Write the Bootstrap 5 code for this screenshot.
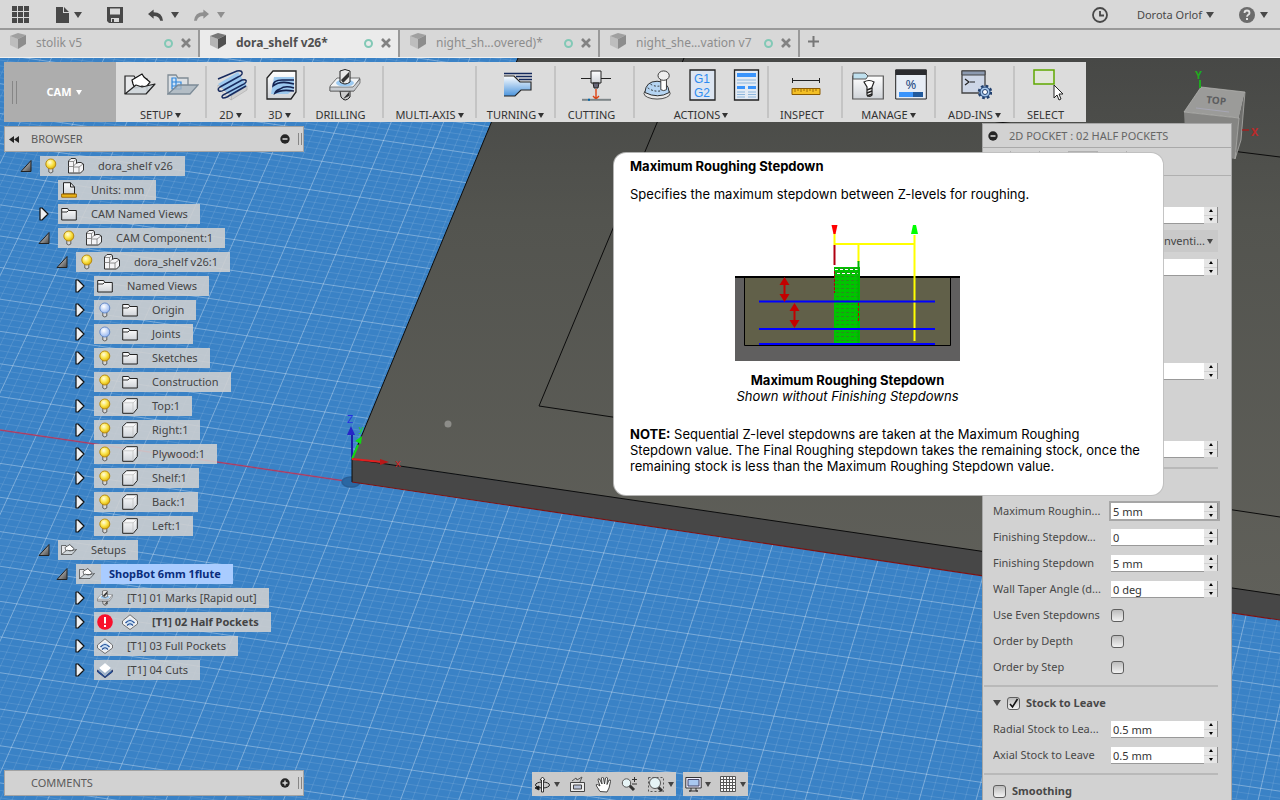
<!DOCTYPE html>
<html lang="en">
<head>
<meta charset="utf-8">
<meta name="viewport" content="width=device-width, initial-scale=1">
<title>dora_shelf v26</title>
<link rel="stylesheet" href="https://cdn.jsdelivr.net/npm/bootstrap@5.3.0/dist/css/bootstrap.min.css">
<style>
  body { font-family: "Noto Sans", "Open Sans", sans-serif; font-size: 11px; line-height: 16px; color: #444; }
  button { color: inherit; line-height: inherit; }
  .plain { background: none; border: 0; padding: 0; display: inline-flex; align-items: center; }
  svg { display: block; flex: none; }
  .tri { width: 0; height: 0; border: 4px solid transparent; border-top: 6px solid currentColor; border-bottom: 0; flex: none; }
  .tri-sm { border-width: 5px 3px 0; }

  .app-bar { height: 30px; background: #d8d8d8; border-bottom: 2px solid #999; padding: 1px 12px 0; color: #484848; }
  .gap-wide { gap: 25px; }
  .gap-mid { gap: 15px; }
  .doc-tabs { height: 28px; background: #d8d8d8; border-bottom: 1px solid #f0f0f0; }
  .doc-tab { width: 200px; border-right: 2px solid #999; padding: 0 7px 1px 10px; font-size: 12px; color: #8d8d8d; }
  .doc-tab > svg { margin: 0 10px 4px 0; }
  .doc-tab.active { background: #ebebeb; color: #505050; font-weight: 700; }
  .doc-tab .sync { width: 9px; height: 9px; border: 2px solid #82c9b6; border-radius: 50%; }

  .stage { background: #3a82c6; }
  .scene { position: absolute; inset: 0; width: 100%; height: 100%; }

  .tools { margin: 4px 0 0 4px; background: #dcdcdc; width: max-content; height: 60px; color: #333; }
  .workspace { width: 112px; background: #adadad; color: #fff; font-weight: 700; position: relative; }
  .grip { width: 5px; height: 23px; border: 1px solid #868686; border-width: 0 1px; }
  .tool-group { padding: 7px 0 0; position: relative; }
  .tool-group .plain { gap: 2px; padding-right: 2px; }
  .tool-group:not(:last-child)::after { content: ""; position: absolute; right: 0; top: 4px; bottom: 4px; width: 2px; background: #c4c4c4; }
  .tool-icons { height: 38px; gap: 11px; }
  .w-sm-group { width: 49px; } .w-md-group { width: 79px; } .w-in { width: 74px; } .w-lg-group { width: 93px; } .w-xl-group { width: 134px; } .w-sel { width: 71px; } .w-set { width: 91px; }
  .w-sel { padding-right: 8px; }

  .dock { width: 300px; margin: 4px 0 4px 4px; }
  .dock-bar { height: 26px; background: #d2d2d2; border: 1px solid #a3a3a3; padding: 0 1px 0 4px; color: #5a5a5a; }
  .dock-bar .grip { height: 12px; width: 4px; }
  .dock-title { margin-left: 12px; }
  .dock-title.solo { margin-left: 22px; }

  .tree, .tree ul { list-style: none; margin: 0; padding: 0; }
  .tree { padding: 2px 0 0 12px; color: #444; }
  .tree ul { padding-left: 18px; }
  .node { height: 24px; }
  .node > .plain, .node > .no-toggle { width: 24px; height: 20px; }
  .chip { height: 20px; background: rgba(208, 208, 208, .88); padding-right: 12px; }
  .chip .slot { width: 25px; display: flex; justify-content: center; padding-right: 3px; }
  .chip .node-text { padding-left: 8px; white-space: nowrap; }
  .chip.picked { padding-right: 0; }
  .chip.picked .node-text { background: #a9ccff; color: #0a2d7c; height: 20px; line-height: 20px; padding-right: 12px; }

  .nav-dock { padding: 0 6px 4px 0; gap: 7px; }
  .nav-set { height: 24px; background: #cacaca; padding: 0 2px; gap: 9px; }
  .nav-set .plain { gap: 3px; }

  .command { width: 250px; margin: 1px 48px 0 0; background: #d2d2d2; border: solid #a6a6a6; border-width: 1px 1px 0; color: #484848; }
  .command-head { height: 24px; border-bottom: 1px solid #a9a9a9; padding-left: 5px; gap: 11px; color: #666; }
  .command-tabs { height: 28px; border-bottom: 1px solid #b0b0b0; padding: 3px 0 0 27px; }
  .command-tabs button { width: 29px; height: 24px; border-left: 1px solid #b0b0b0; }
  .command-tabs .on { border: 1px solid #b0b0b0; }
  .field { height: 26px; padding: 0 13px 0 10px; display: flex; align-items: center; }
  .field > label:first-child { width: 110px; margin-right: 8px; overflow: hidden; text-overflow: ellipsis; white-space: nowrap; }
  .spin-box { display: flex; height: 16px; width: 107px; margin-left: auto; border-right: 1px solid #8d8d8d; }
  .spin-box input { flex: 1; min-width: 0; border: 0; border-bottom: 1px solid #999; background: #fff; padding: 0 2px; color: #333; outline: 0; height: 17px; line-height: 15px; }
  .spin-box.focused { outline: 2px solid #a6a6a6; }
  .spin-btns { width: 13px; display: flex; flex-direction: column; gap: 1px; }
  .spin-btns button { background: #e6e6e6; border: 0; padding: 0; height: 8px; display: flex; align-items: center; justify-content: center; }
  .spin-btns i { border: 2px solid transparent; width: 0; height: 0; }
  .spin-btns .up { border-bottom: 3px solid #000; border-top: 0; } .spin-btns .down { border-top: 3px solid #000; border-bottom: 0; }
  .pick { width: 107px; margin-left: auto; background: #c9c9c9; height: 22px; padding-right: 5px; display: flex; align-items: center; justify-content: flex-end; }
  .pick select { appearance: none; border: 0; background: none; padding: 0 2px 0 0; color: #444; text-align: right; width: 75px; text-overflow: ellipsis; }
  .tick { appearance: none; width: 13px; height: 13px; border: 1px solid #5e5e5e; border-radius: 3px; background: linear-gradient(#bcbcbc, #f2f2f2); margin: 0; flex: none; }
  .tick:checked { background: url("data:image/svg+xml,%3Csvg xmlns='http://www.w3.org/2000/svg' viewBox='0 0 11 11'%3E%3Cpath d='M2 6l2.500 3L9.500 1' fill='none' stroke='%23111' stroke-width='1.600'/%3E%3C/svg%3E"), linear-gradient(#bcbcbc, #f2f2f2); }
  .gap-tick { gap: 6px; }
  .rule { height: 10px; margin: 0 13px 0 1px; padding-top: 5px; }
  .rule::before { content: ""; display: block; height: 2px; background: #b9b9b9; }

  .help-tip { position: absolute; left: 614px; top: 95px; width: 549px; height: 342px; background: #fff; border-radius: 12px; box-shadow: 0 0 0 1px rgba(190,190,190,.9); color: #000; padding: 5px 16px; font-family: Inter, sans-serif; font-size: 13px; }
  .help-tip p { margin: 0 0 12px; white-space: nowrap; }
  .help-tip .figure-box { width: 435px; padding-top: 11px; text-align: center; }
  .help-tip .figure-box svg { margin: 0 auto 11px; }
  .help-tip .note-text { padding-top: 22px; }
</style>
</head>
<body class="vh-100 d-flex flex-column overflow-hidden">

<svg width="0" height="0" class="position-absolute" aria-hidden="true">
  <defs>
    <linearGradient id="gWhite" x1="0" y1="0" x2="0" y2="1"><stop offset="0" stop-color="#fff"/><stop offset="1" stop-color="#cfd3d8"/></linearGradient>
    <linearGradient id="gBlue" x1="0" y1="0" x2="0" y2="1"><stop offset="0" stop-color="#fff"/><stop offset="1" stop-color="#4a94dd"/></linearGradient>
    <radialGradient id="gYel" cx=".4" cy=".35" r=".7"><stop offset="0" stop-color="#fffbe0"/><stop offset=".5" stop-color="#fbe64e"/><stop offset="1" stop-color="#d9a800"/></radialGradient>
    <radialGradient id="gOff" cx=".4" cy=".35" r=".7"><stop offset="0" stop-color="#fff"/><stop offset="1" stop-color="#8fb2f2"/></radialGradient>
    <linearGradient id="gDark" x1="0" y1="0" x2="1" y2="1"><stop offset="0" stop-color="#eee"/><stop offset="1" stop-color="#444"/></linearGradient>
  </defs>
  <symbol id="cube" viewBox="0 0 16 16"><path d="M0 3L8 0l8 2-8 4z" fill="currentColor" opacity=".75"/><path d="M0 3l8 3v10l-8-4z" fill="currentColor" opacity=".35"/><path d="M8 6l8-4v9l-8 5z" fill="currentColor"/></symbol>
  <symbol id="open" viewBox="0 0 20 20"><path d="M15 4.500v11H5z" fill="url(#gDark)" stroke="#222" stroke-linejoin="round"/></symbol>
  <symbol id="shut" viewBox="0 0 20 20"><path d="M6 4h2l6 6-6 6H6z" fill="#eef0f2" stroke="#111" stroke-width="1.200" stroke-linejoin="round"/></symbol>
  <symbol id="bulb" viewBox="0 0 16 16"><path d="M5.800 9.500h4v4.500q-2 2-4 0z" fill="#d9d9d9" stroke="#555" stroke-width=".9"/><circle cx="7.800" cy="6" r="5" fill="url(#gYel)" stroke="#b38208" stroke-width=".9"/></symbol>
  <symbol id="bulbOff" viewBox="0 0 16 16"><path d="M5.800 9.500h4v4.500q-2 2-4 0z" fill="#d9d9d9" stroke="#555" stroke-width=".9"/><circle cx="7.800" cy="6" r="5" fill="url(#gOff)" stroke="#5e83c4" stroke-width=".9"/></symbol>
  <symbol id="comp" viewBox="0 0 16 16"><path d="M.5 3L3 .5h4.500l1 1V5.500l1.500-1h3l2.500 1.500v6l-3 3H.5z" fill="#f4f4f6" stroke="#333" stroke-linejoin="round"/><path d="M.5 8.500h5M5.500 15V4M1 3.500h5l2-2.500M5.500 9h5.500v6M11 9l4-3M5.500 8l3-3" fill="none" stroke="#777" stroke-width=".8"/></symbol>
  <symbol id="solid" viewBox="0 0 16 16"><path d="M.7 4.500L4.500.7h10.800v9.800l-4 4.800H.7z" fill="url(#gWhite)" stroke="#222" stroke-linejoin="round"/><path d="M11 5l3.500-3.500M2 4.800h9v9.500" fill="none" stroke="#bbb" stroke-width=".7"/></symbol>
  <symbol id="folder" viewBox="0 0 16 16"><path d="M.7 14V2.500h6l1 2h7.600V14z" fill="url(#gWhite)" stroke="#222"/><path d="M1 6h5l1.500-1.500" fill="none" stroke="#333"/></symbol>
  <symbol id="units" viewBox="0 0 16 16"><path d="M2.500 12V.7h7L13.500 5v7z" fill="url(#gWhite)" stroke="#222"/><path d="M9.500.7V5h4" fill="none" stroke="#222"/><path d="M.7 12h14.600v3.200H.7z" fill="#f8c21c" stroke="#9a6500"/><path d="M3 12v1.500M5 12v1.500M7 12v1.500M9 12v1.500M11 12v1.500M13 12v1.500" stroke="#9a6500" stroke-width=".7"/></symbol>
  <symbol id="setup" viewBox="0 0 32 24"><path d="M1 21V3h9l2 3h11v12" fill="#e8e9eb" stroke="#222" stroke-width="1.200"/><path d="M8 9l5 7 4-2z" fill="#8bbdea"/><path d="M8 7l5-3 5-3 2 3 6 5-4 5-4-1-7 2-2-4z" fill="#fff" stroke="#111" stroke-width="1.200"/><path d="M1 21l11-9 6 2 13-3-9 10z" fill="#cfd6da" fill-opacity=".9" stroke="#222" stroke-width="1.200" stroke-linejoin="round"/></symbol>
  <symbol id="setup2" viewBox="0 0 32 24"><path d="M1 21V2h8l2 3h10v7" fill="#dce0e4" stroke="#7f8b94" stroke-width="1.300"/><path d="M5 5h4v4h5v7H5zM5 9h9M9 9v7M5 13h9" fill="#cfe3f7" stroke="#2f86da" stroke-width="1.200"/><path d="M1 21l10-9h20l-8 9z" fill="#a9b5bf" fill-opacity=".8" stroke="#7c8b97" stroke-width="1.300"/></symbol>
  <symbol id="twod" viewBox="0 0 32 32"><path d="M2 15L22 3l9 14-16 11z" fill="#9cc8ee"/><path d="M15 27l16-10v4L15 31z" fill="#cfcfcf" stroke="#aaa" stroke-width=".6"/><path d="M2 16l13 11v4L2 19z" fill="#e3e3e3" stroke="#aaa" stroke-width=".6"/><path d="M2 10L21 2q6-1 5 3-1 2-4 3L4 18q-3 2-1 4 2 1 5-1l18-10q5-1 4 2-1 2-4 3L7 26q-2 2 0 3 2 0 4-1l19-11" fill="none" stroke="#182b5e" stroke-width="1.500"/></symbol>
  <symbol id="threed" viewBox="0 0 32 32"><path d="M2 30V9l6-7h23v21l-5 7z" fill="url(#gWhite)" stroke="#222" stroke-width="1.300"/><path d="M9 8h20v12l-6 5H6z" fill="#9cc8ee"/><path d="M29 11H17q-9 0-9 6 7-6 21-2M29 19q-9-3-14 1-4 1-5 4 6-4 19-2" fill="none" stroke="#132250" stroke-width="1.600"/></symbol>
  <symbol id="drill" viewBox="0 0 32 32"><path d="M11 22h10v6q-5 6-9 0z" fill="#ccc" stroke="#222"/><path d="M1 17l7-8h23l-6 9v4H1z" fill="#f1f3f5" stroke="#555" stroke-width=".8"/><path d="M1 18h23l7-8v4l-6 8H1z" fill="#c8ccd1" stroke="#555" stroke-width=".7"/><ellipse cx="16" cy="14" rx="9" ry="3.500" fill="#9ccaf2"/><path d="M11 2q5-3 10 0v11q-5 4-10 0z" fill="#e8e8e8" stroke="#222"/><path d="M12 11l8-8v5l-6 6zM14 30l6-7v4z" fill="#333"/></symbol>
  <symbol id="turn" viewBox="0 0 32 32"><path d="M3 7h9l6 6h12v8H20l-6 6H3z" fill="url(#gBlue)"/><path d="M3 7h10l6 6h11v8H20l-6 6H3" fill="none" stroke="#222" stroke-width="1.100"/><path d="M3 4.500h28M15 7.500h16M18 10.500h13" stroke="#14295c" stroke-width="1.500"/></symbol>
  <symbol id="cut" viewBox="0 0 32 32"><path d="M1 9.500h30" stroke="#222"/><path d="M11 2h10v12H11z" fill="url(#gWhite)" stroke="#222"/><path d="M13 14h6l-1 5h-4z" fill="#667" stroke="#222"/><path d="M16 20v9M13 27l3 3 3-3" fill="none" stroke="#dd4010" stroke-width="1.400"/><path d="M2 30.800h29" stroke="#7d8588" stroke-width="2"/><path d="M8 30.800h2" stroke="#06a" stroke-width="2"/></symbol>
  <symbol id="simulate" viewBox="0 0 32 32"><ellipse cx="15" cy="25" rx="14" ry="6" fill="#e8e8e8" stroke="#444"/><path d="M2 24q1-12 13-12t13 12q-12 7-26 0z" fill="#b6d5f3" stroke="#222"/><path d="M5 19q7 5 15 3M8 15q6 4 14 1" fill="none" stroke="#222" stroke-dasharray="2 2"/><path d="M19 9h6v12q-3 2-6 0z" fill="#fff" stroke="#333"/><ellipse cx="22" cy="6" rx="6" ry="5" fill="#eee" stroke="#333"/></symbol>
  <symbol id="sheet" viewBox="0 0 28 32"><path d="M1.500 1h24v30h-24z" fill="#e4ebf4" stroke="#222" stroke-width="1.300"/><path d="M4 4h19v4H4zM4 17h8v3H4zM15 17h8v3h-8z" fill="#3a94fb"/><path d="M4 11h19M4 14h19M4 23h8M15 23h8M4 25.500h8M15 25.500h8M4 28h8M15 28h8" stroke="#8db6dc"/></symbol>
  <symbol id="ruler" viewBox="0 0 32 32"><path d="M2 11.500h28M2.500 9v5M29.500 9v5" stroke="#222"/><path d="M2 19.500h28v6H2z" fill="#f3bf25" stroke="#8b5a00"/><path d="M5 20v3M8 20v2M11 20v3M14 20v2M17 20v3M20 20v2M23 20v3M26 20v2" stroke="#8b5a00" stroke-width=".8"/></symbol>
  <symbol id="toolLib" viewBox="0 0 32 32"><path d="M.7 30V7h30.600v23z" fill="url(#gWhite)" stroke="#555" stroke-width="1.200"/><path d="M1 10V4h12l3 3-2 3z" fill="#bfe0ee" stroke="#555"/><path d="M12 13q5-3 10 0l-2 5v8q-3 3-5 0v-8z" fill="#fff" stroke="#222" stroke-width="1.200"/><path d="M15 21l5-2M15 24l5-2M15 27l5-2" stroke="#222" stroke-width="1.400"/></symbol>
  <symbol id="addin" viewBox="0 0 32 32"><path d="M2 2h23v22H2z" fill="#cdd6e6" stroke="#444" stroke-width="1.300"/><path d="M2 2h23v4H2z" fill="#8c9ab0" stroke="#444"/><path d="M5 10l4 3-4 3M10 13h5" fill="none" stroke="#222" stroke-width="1.200"/><circle cx="25" cy="23" r="6" fill="#a6c8ee" stroke="#22406e" stroke-width="2.500" stroke-dasharray="2.600 2.100"/><circle cx="25" cy="23" r="5" fill="#a6c8ee" stroke="#22406e"/><circle cx="25" cy="23" r="2.500" fill="#fff" stroke="#22406e"/></symbol>
  <symbol id="select" viewBox="0 0 32 32"><path d="M5 1h20v14H5z" fill="#e2e6da" stroke="#5fa800" stroke-width="1.500"/><path d="M25 16v13l3-3 2 5 2-1-2-5h4z" fill="#fff" stroke="#222"/></symbol>
  <symbol id="pocket" viewBox="0 0 16 16"><path d="M.5 7L8 .8 15.500 7v3L8 15.500.5 10z" fill="#f0f1f3" stroke="#555" stroke-width=".8"/><path d="M8 4l5 4-5 5-5-5z" fill="#c9def4"/><path d="M3.500 9q4.500-5 9 0M5 11.500q3-3.500 6 0" fill="none" stroke="#1d4a92" stroke-width="1.200"/></symbol>
  <symbol id="contour" viewBox="0 0 16 16"><path d="M.5 8L8 14.500 15.500 8v2L8 15.800.5 10z" fill="#1b5db0" stroke="#114" stroke-width=".6"/><path d="M2 6l6-5 6 5v3l-6 5-6-5z" fill="#9fb4cc"/><path d="M2 6l6-5 6 5-6 5z" fill="#fff"/></symbol>
  <symbol id="alert" viewBox="0 0 16 16"><circle cx="8" cy="8" r="7.800" fill="#f8102c"/><path d="M8 3v6.500M8 11v2" stroke="#fff" stroke-width="2"/></symbol>
  <symbol id="minus" viewBox="0 0 10 10"><circle cx="5" cy="5" r="4.700" fill="#262626"/><path d="M2.500 5h5" stroke="#ddd" stroke-width="1.500"/></symbol>
  <symbol id="plus" viewBox="0 0 10 10"><circle cx="5" cy="5" r="4.700" fill="#262626"/><path d="M2.500 5h5M5 2.500v5" stroke="#ddd" stroke-width="1.400"/></symbol>
  <symbol id="close" viewBox="0 0 10 10"><path d="M1 1l8 8M9 1L1 9" stroke="#828282" stroke-width="2.600"/></symbol>
</svg>

<header>
  <div class="app-bar d-flex align-items-center">
    <div class="d-flex align-items-center gap-wide">
      <button class="plain" aria-label="Data panel"><svg width="17" height="17" viewBox="0 0 17 17" fill="currentColor"><path d="M0 0h5v5H0zM6 0h5v5H6zM12 0h5v5h-5zM0 6h5v5H0zM6 6h5v5H6zM12 6h5v5h-5zM0 12h5v5H0zM6 12h5v5H6zM12 12h5v5h-5z"/></svg></button>
      <button class="plain gap-1" aria-label="File"><svg width="16" height="16" viewBox="0 0 16 16" fill="currentColor"><path d="M2 0h7v6h6v10H2zM10 0l5 5h-5z"/></svg><span class="tri"></span></button>
      <button class="plain" aria-label="Save"><svg width="16" height="16" viewBox="0 0 16 16"><path d="M0 0h16v16H2l-2-2z" fill="currentColor"/><path d="M3 1.500h10v6H3zM4 11h8v4H4z" fill="#d8d8d8"/><path d="M5 12h2v3H5z" fill="currentColor"/></svg></button>
      <div class="d-flex gap-mid">
        <button class="plain gap-2" aria-label="Undo"><svg width="15" height="12" viewBox="0 0 16 12"><path d="M0 5l6-5v3q9 0 10 9h-3q-1-5-7-5v3z" fill="currentColor"/></svg><span class="tri"></span></button>
        <button class="plain gap-2 opacity-50" aria-label="Redo"><svg width="15" height="12" viewBox="0 0 16 12"><path d="M16 5l-6-5v3Q1 3 0 12h3q1-5 7-5v3z" fill="currentColor"/></svg><span class="tri"></span></button>
      </div>
    </div>
    <div class="d-flex align-items-center ms-auto gap-wide">
      <button class="plain me-1" aria-label="Job status"><svg width="16" height="16" viewBox="0 0 16 16"><circle cx="8" cy="8" r="7" fill="none" stroke="currentColor" stroke-width="1.800"/><path d="M8 4v4.500h4" fill="none" stroke="currentColor" stroke-width="1.800"/></svg></button>
      <button class="plain gap-1">Dorota Orlof <span class="tri"></span></button>
      <button class="plain gap-1" aria-label="Help"><svg width="17" height="16" viewBox="0 0 17 16"><circle cx="8" cy="8" r="8" fill="#6b6b6b"/><path d="M5.500 6q0-2.500 2.500-2.500T10.500 6q0 1-1.200 1.800T8 9.800" fill="none" stroke="#e4e4e4" stroke-width="1.800"/><path d="M7 11h2v2H7z" fill="#e4e4e4"/></svg><span class="tri"></span></button>
    </div>
  </div>
  <nav class="doc-tabs d-flex">
    <div class="doc-tab d-flex align-items-center"><svg width="16" height="16"><use href="#cube"/></svg><a href="#" class="text-reset text-decoration-none me-auto">stolik v5</a><span class="sync me-2"></span><button class="plain" aria-label="Close"><svg width="10" height="10"><use href="#close"/></svg></button></div>
    <div class="doc-tab active d-flex align-items-center"><svg width="16" height="16"><use href="#cube"/></svg><a href="#" class="text-reset text-decoration-none me-auto">dora_shelf v26*</a><span class="sync me-2"></span><button class="plain" aria-label="Close"><svg width="10" height="10"><use href="#close"/></svg></button></div>
    <div class="doc-tab d-flex align-items-center"><svg width="16" height="16"><use href="#cube"/></svg><a href="#" class="text-reset text-decoration-none me-auto">night_sh...overed)*</a><span class="sync me-2"></span><button class="plain" aria-label="Close"><svg width="10" height="10"><use href="#close"/></svg></button></div>
    <div class="doc-tab d-flex align-items-center"><svg width="16" height="16"><use href="#cube"/></svg><a href="#" class="text-reset text-decoration-none me-auto">night_she...vation v7</a><span class="sync me-2"></span><button class="plain" aria-label="Close"><svg width="10" height="10"><use href="#close"/></svg></button></div>
    <button class="plain ms-2 pb-1" aria-label="New tab"><svg width="11" height="11" viewBox="0 0 11 11"><path d="M5.500 0v11M0 5.500h11" stroke="#777" stroke-width="2"/></svg></button>
  </nav>
</header>

<main class="stage flex-fill position-relative d-flex flex-column overflow-hidden">
  <svg class="scene" viewBox="0 58 1280 742" preserveAspectRatio="xMinYMin slice" aria-hidden="true">
    <defs>
      <linearGradient id="gTop" x1="0" y1="58" x2="0" y2="600" gradientUnits="userSpaceOnUse"><stop offset="0" stop-color="#474846"/><stop offset=".3" stop-color="#53544f"/><stop offset="1" stop-color="#60605a"/></linearGradient>
    </defs>
    <g fill="none" stroke="#fff"><path id="minorGrid" stroke-opacity=".11"/><path id="majorGrid" stroke-opacity=".33"/></g>
    <path d="M0 430L352 482" stroke="#a83f66" stroke-width="1.400"/>
    <ellipse cx="351" cy="482" rx="9" ry="5" fill="#2a67a3" stroke="#2a5f96" stroke-width="1.500"/>
    <path d="M352 459L518 58H1280V596z" fill="url(#gTop)"/>
    <path d="M352 459L1280 595V620L352 482z" fill="#474747"/>
    <path d="M518 58L352 459 1280 595M684 58L539 406 1280 517M830 101L1280 157M352 459V482" fill="none" stroke="#0c0c0c"/>
    <path d="M352 482L1280 620" stroke="#7d1212" stroke-width="1.200"/>
    <circle cx="448" cy="424" r="3.500" fill="#8d8d89"/>
    <path d="M352 459V432" stroke="#1d1da8" stroke-width="2"/><path d="M351 426l4 9h-8z" fill="#2525c8"/>
    <path d="M352 459l6-14" stroke="#12d912" stroke-width="2"/><path d="M362 436l-1 8-6-3z" fill="#12d912"/>
    <path d="M352 459l30 3" stroke="#e02020" stroke-width="2"/><path d="M389 462l-9 3v-6z" fill="#b81818"/>
    <g font-size="11"><text x="347" y="423" fill="#2530e0">Z</text><text x="359" y="432" font-size="9" fill="#12d912">y</text><text x="395" y="467" fill="#c22">x</text></g>
    <!-- view cube -->
    <path d="M1201 87l44 5-6 26-55-6z" fill="#9b9b99"/><path d="M1184 112l55 6-4 41-49-8z" fill="#858583"/><path d="M1245 92l-4 48-6 19 4-41z" fill="#6f6f6d"/>
    <path d="M1201 87l44 5-4 48-6 19 4-41-55-6z" fill="none" stroke="#b7b7b5" stroke-width=".7"/><path d="M1196 108l33 4" stroke="#aab" stroke-width=".8"/>
    <text transform="translate(1206 103) rotate(6)" font-size="10" font-weight="700" fill="#5d5e60">TOP</text>
    <path d="M1200 80v8" stroke="#1faa1f" stroke-width="2"/><text x="1195" y="79" font-size="11" font-weight="700" fill="#1faa1f">Y</text>
    <path d="M1242 130h7" stroke="#a32020" stroke-width="1.500"/><text x="1251" y="136" font-size="11" font-weight="700" fill="#b92a2a">X</text>
  </svg>

  <div class="tools d-flex position-relative">
    <button class="workspace plain justify-content-center"><span class="grip position-absolute start-0 ms-2"></span><span class="me-1 ms-2">CAM</span><span class="tri tri-sm"></span></button>
    <div class="tool-group w-set"><div class="tool-icons d-flex justify-content-center"><svg width="32" height="32"><use href="#setup"/></svg><svg width="32" height="32"><use href="#setup2"/></svg></div><button class="plain w-100 justify-content-center">SETUP<span class="tri tri-sm"></span></button></div>
    <div class="tool-group w-sm-group"><div class="tool-icons d-flex justify-content-center"><svg width="32" height="32"><use href="#twod"/></svg></div><button class="plain w-100 justify-content-center">2D<span class="tri tri-sm"></span></button></div>
    <div class="tool-group w-sm-group"><div class="tool-icons d-flex justify-content-center"><svg width="32" height="32"><use href="#threed"/></svg></div><button class="plain w-100 justify-content-center">3D<span class="tri tri-sm"></span></button></div>
    <div class="tool-group w-md-group"><div class="tool-icons d-flex justify-content-center"><svg width="32" height="32"><use href="#drill"/></svg></div><button class="plain w-100 justify-content-center pe-2">DRILLING</button></div>
    <div class="tool-group w-lg-group"><div class="tool-icons"></div><button class="plain w-100 justify-content-center">MULTI-AXIS<span class="tri tri-sm"></span></button></div>
    <div class="tool-group w-md-group"><div class="tool-icons d-flex justify-content-center"><svg width="32" height="32"><use href="#turn"/></svg></div><button class="plain w-100 justify-content-center">TURNING<span class="tri tri-sm"></span></button></div>
    <div class="tool-group w-md-group"><div class="tool-icons d-flex justify-content-center"><svg width="32" height="32"><use href="#cut"/></svg></div><button class="plain w-100 justify-content-center pe-2">CUTTING</button></div>
    <div class="tool-group w-xl-group"><div class="tool-icons d-flex justify-content-center gap-3"><svg width="30" height="32"><use href="#simulate"/></svg><svg width="28" height="32" viewBox="0 0 28 32"><path d="M1 1h25v30H1z" fill="#dde6f2" stroke="#222" stroke-width="1.300"/><g font-family="Liberation Sans, sans-serif" font-size="12" fill="#2d8bf0" text-anchor="middle"><text x="13" y="14">G1</text><text x="13" y="28">G2</text></g></svg><svg width="28" height="32"><use href="#sheet"/></svg></div><button class="plain w-100 justify-content-center">ACTIONS<span class="tri tri-sm"></span></button></div>
    <div class="tool-group w-in"><div class="tool-icons d-flex justify-content-center"><svg width="32" height="32"><use href="#ruler"/></svg></div><button class="plain w-100 justify-content-center pe-2">INSPECT</button></div>
    <div class="tool-group w-lg-group"><div class="tool-icons d-flex justify-content-center"><svg width="32" height="32"><use href="#toolLib"/></svg><svg width="32" height="32" viewBox="0 0 32 32"><path d="M.7 1h30.600v29H.7z" fill="#e7edf5" stroke="#222"/><path d="M.5.500h31V6H.5z" fill="#2a2c30"/><text x="16" y="20" text-anchor="middle" font-size="13" fill="#1d4a82">%</text><path d="M4 23h14v5H4z" fill="#3a94fb"/><path d="M18 23h10v5H18z" fill="#215a9c"/></svg></div><button class="plain w-100 justify-content-center">MANAGE<span class="tri tri-sm"></span></button></div>
    <div class="tool-group w-md-group"><div class="tool-icons d-flex justify-content-center"><svg width="32" height="32"><use href="#addin"/></svg></div><button class="plain w-100 justify-content-center">ADD-INS<span class="tri tri-sm"></span></button></div>
    <div class="tool-group w-sel"><div class="tool-icons d-flex justify-content-center"><svg width="36" height="32" viewBox="0 0 36 32"><path d="M5 1h20v14H5z" fill="#e2e6da" stroke="#5fa800" stroke-width="1.500"/><path d="M25 16v13l3-3 2 5 2-1-2-5h4z" fill="#fff" stroke="#222"/></svg></div><button class="plain w-100 justify-content-center">SELECT</button></div>
  </div>

  <div class="d-flex flex-fill position-relative overflow-hidden">
    <aside class="dock d-flex flex-column">
      <div class="dock-bar d-flex align-items-center"><button class="plain" aria-label="Collapse"><svg width="10" height="7" viewBox="0 0 10 7"><path d="M5 0v7L0 3.500zM10 0v7L5 3.500z" fill="#222"/></svg></button><span class="dock-title me-auto">BROWSER</span><button class="plain me-2" aria-label="Hide browser"><svg width="10" height="10"><use href="#minus"/></svg></button><span class="grip"></span></div>
      <ul class="tree" id="tree"></ul>
      <div class="dock-bar d-flex align-items-center mt-auto"><span class="dock-title solo me-auto">COMMENTS</span><button class="plain me-2" aria-label="Add comment"><svg width="10" height="10"><use href="#plus"/></svg></button><span class="grip"></span></div>
    </aside>

    <div class="nav-dock flex-fill d-flex justify-content-center align-items-end">
      <div class="nav-set d-flex align-items-center">
        <button class="plain" aria-label="Orbit"><svg width="17" height="17" viewBox="0 0 17 17" fill="none" stroke="#222"><ellipse cx="8.500" cy="9" rx="7" ry="3"/><path d="M7.500 16V4H6l2.500-3L11 4H9.500v12z" fill="#fff" stroke-width=".9"/><path d="M1 12l4-2v4z" fill="#111"/></svg><span class="tri tri-sm"></span></button>
        <button class="plain" aria-label="Look at"><svg width="17" height="17" viewBox="0 0 17 17"><path d="M1.500 6.500h14v9h-14z" fill="#eee" stroke="#444"/><path d="M4.500 9h8v4h-8z" fill="#bbc3d8" stroke="#444"/><path d="M3 5l4-3 1 2 5-3-2 5" fill="none" stroke="#555"/></svg></button>
        <button class="plain" aria-label="Pan"><svg width="17" height="17" viewBox="0 0 17 17"><path d="M5 15.500L1.500 10q-1-2 1-1.500L5 10 3 4q0-2 1.500-1L7 8 6.500 2q1-2 2 0L9.500 8l1-6q1.500-1.500 2 0L12 8.500 14 4q2-.5 1.500 1.500L14 12l-2 4z" fill="#fff" stroke="#333" stroke-width=".9"/></svg></button>
        <button class="plain" aria-label="Zoom"><svg width="17" height="17" viewBox="0 0 17 17"><path d="M8 9l5 5" stroke="#333" stroke-width="3"/><circle cx="5.500" cy="7" r="4.200" fill="#e6f4f6" stroke="#555"/><path d="M11 3.500h5M13.500 1v5M11 8h5" stroke="#333"/></svg></button>
        <button class="plain" aria-label="Fit"><svg width="18" height="17" viewBox="0 0 18 17"><path d="M1.500 1.500h15v14h-15z" fill="none" stroke="#555" stroke-dasharray="2 2"/><path d="M11 11l4 4" stroke="#333" stroke-width="3"/><circle cx="8" cy="7" r="5.500" fill="#e6f4f6" stroke="#555"/></svg><span class="tri tri-sm"></span></button>
      </div>
      <div class="nav-set d-flex align-items-center">
        <button class="plain" aria-label="Display"><svg width="17" height="17" viewBox="0 0 17 17"><path d="M.8 1.500h15.400v10.500H.8z" fill="#eef" stroke="#333"/><path d="M3 3.500h11v6.500H3z" fill="#a9c8f0" stroke="#446"/><path d="M6 12v3H4h9-2v-3" fill="none" stroke="#333"/></svg><span class="tri tri-sm"></span></button>
        <button class="plain" aria-label="Grid"><svg width="17" height="17" viewBox="0 0 17 17"><path d="M.5.5h15v15H.5zM3.500.5v15M6.500.5v15M9.500.5v15M12.500.5v15M.5 3.500h15M.5 6.500h15M.5 9.500h15M.5 12.500h15" fill="#fafafa" stroke="#555"/></svg><span class="tri tri-sm"></span></button>
      </div>
    </div>

    <aside class="command overflow-hidden">
      <div class="command-head d-flex align-items-center"><button class="plain" aria-label="Collapse dialog"><svg width="10" height="10"><use href="#minus"/></svg></button><span>2D POCKET : 02 HALF POCKETS</span></div>
      <div class="command-tabs d-flex"><button class="plain" aria-label="Tool"></button><button class="plain" aria-label="Geometry"></button><button class="plain on" aria-label="Heights"></button><button class="plain" aria-label="Passes"></button><button class="plain" aria-label="Linking"></button></div>
      <form id="fields"></form>
    </aside>
  </div>

  <div class="help-tip" role="tooltip">
    <p><strong>Maximum Roughing Stepdown</strong></p>
    <p>Specifies the maximum stepdown between Z-levels for roughing.</p>
    <div class="figure-box">
      <svg width="225" height="136" viewBox="0 0 225 136" aria-hidden="true">
        <defs><pattern id="mesh" width="5" height="4" patternUnits="userSpaceOnUse"><path d="M0 0h5v4H0z" fill="#00c400"/><path d="M1 3h3v1H1z" fill="#2c8a20"/></pattern></defs>
        <path d="M0 52h225v84H0z" fill="#605f5f"/><path d="M9.500 52h206v68.500h-206z" fill="#616049" stroke="#000"/><path d="M0 52h225" stroke="#000" stroke-width="2"/>
        <path d="M99 42h26v77H99z" fill="url(#mesh)"/><path d="M100 44.500h24M102 48.500h22" stroke="#fff" stroke-dasharray="3 2"/>
        <path d="M99.500 8v12M99.500 19H180M123.500 19v18M179.500 10v106" fill="none" stroke="#ff0" stroke-width="2"/>
        <path d="M99.500 20v20" stroke="#b00010" stroke-width="2"/><path d="M99.500 46v22" stroke="#b00010" stroke-dasharray="3 1"/><path d="M123.500 36v84" stroke="#00b400" stroke-width="2"/><path d="M123.500 78v18" stroke="#c00" stroke-dasharray="3 2"/>
        <path d="M96.500 0h6l-2 9h-2z" fill="#f00"/><path d="M178 0h3l2 9h-7z" fill="#0f0"/>
        <path d="M24 76.500h176M24 104h176M24 119h176" stroke="#00f" stroke-width="2"/>
        <path d="M49.500 54v20M59.500 80v20" stroke="#c40000" stroke-width="2"/><path d="M49.500 52l5 8h-10zM49.500 77l5-8h-10zM59.500 78l5 8h-10zM59.500 103l5-8h-10z" fill="#c40000"/>
      </svg>
      <strong class="d-block">Maximum Roughing Stepdown</strong>
      <em class="d-block">Shown without Finishing Stepdowns</em>
    </div>
    <p class="note-text"><strong>NOTE:</strong> Sequential Z-level stepdowns are taken at the Maximum Roughing<br>Stepdown value. The Final Roughing stepdown takes the remaining stock, once the<br>remaining stock is less than the Maximum Roughing Stepdown value.</p>
  </div>
</main>

<script src="https://cdn.jsdelivr.net/npm/bootstrap@5.3.0/dist/js/bootstrap.bundle.min.js"></script>
<script>
  // Ground grid: u runs along the red axis, v towards the viewer, with mild perspective.
  const point = (u, v) => {
    const w = 1 - 0.0055 * v;
    return (352 + (52.6 * u - 12.6 * v) / w).toFixed(1) + ' ' + (482 + (7.8 * u + 31.5 * v) / w).toFixed(1);
  };
  let minor = '', major = '';
  for (let i = -125; i <= 125; i++) {
    const k = i / 5;
    const d = 'M' + point(k, -16) + 'L' + point(k, 14) + (k >= -16 && k <= 14 ? 'M' + point(-25, k) + 'L' + point(25, k) : '');
    if (i % 5) minor += d; else major += d;
  }
  document.getElementById('minorGrid').setAttribute('d', minor);
  document.getElementById('majorGrid').setAttribute('d', major);

  // Browser tree: t = text, i = icons, s = toggle state, c = children.
  const leaf = (t, ...i) => ({ t, i, s: 'shut' });
  const tree = [{ t: 'dora_shelf v26', i: ['bulb', 'comp'], s: 'open', c: [
    { t: 'Units: mm', i: ['units'] },
    leaf('CAM Named Views', 'folder'),
    { t: 'CAM Component:1', i: ['bulb', 'comp'], s: 'open', c: [
      { t: 'dora_shelf v26:1', i: ['bulb', 'comp'], s: 'open', c: [
        leaf('Named Views', 'folder'), leaf('Origin', 'bulbOff', 'folder'), leaf('Joints', 'bulbOff', 'folder'),
        leaf('Sketches', 'bulb', 'folder'), leaf('Construction', 'bulb', 'folder'),
        ...['Top:1', 'Right:1', 'Plywood:1', 'Shelf:1', 'Back:1', 'Left:1'].map(t => leaf(t, 'bulb', 'solid'))
      ] }
    ] },
    { t: 'Setups', i: ['setup'], s: 'open', c: [
      { t: 'ShopBot 6mm 1flute', i: ['setup'], s: 'open', picked: true, bold: true, c: [
        leaf('[T1] 01 Marks [Rapid out]', 'drill'),
        { t: '[T1] 02 Half Pockets', i: ['alert', 'pocket'], s: 'shut', bold: true },
        leaf('[T1] 03 Full Pockets', 'pocket'), leaf('[T1] 04 Cuts', 'contour')
      ] }
    ] }
  ] }];
  const draw = n => `<li><div class="node d-flex align-items-center">${n.s
      ? `<button class="plain" aria-label="Toggle"><svg width="20" height="20"><use href="#${n.s}"/></svg></button>`
      : '<span class="no-toggle"></span>'}<div class="chip d-flex align-items-center${n.picked ? ' picked' : ''}">${
      n.i.map(i => `<span class="slot"><svg width="16" height="16"><use href="#${i}"/></svg></span>`).join('')
      }<span class="node-text${n.bold ? ' fw-bold' : ''}">${n.t}</span></div></div>${n.c ? `<ul>${n.c.map(draw).join('')}</ul>` : ''}</li>`;
  document.getElementById('tree').innerHTML = tree.map(draw).join('');

  // Command dialog fields.
  let id = 0;
  const spin = (label, value, cls = '') => `<div class="field">${label ? `<label for="f${++id}">${label}</label>` : ''}<div class="spin-box ${cls}"><input type="text" ${label ? `id="f${id}"` : 'aria-label="Value"'} value="${value}"><span class="spin-btns"><button type="button" aria-label="Increase"><i class="up"></i></button><button type="button" aria-label="Decrease"><i class="down"></i></button></span></div></div>`;
  const check = label => `<div class="field"><label for="f${++id}">${label}</label><input class="tick" type="checkbox" id="f${id}"></div>`;
  const blank = '<div class="field"></div>', rule = '<div class="rule"></div>';
  document.getElementById('fields').innerHTML = [
    blank, spin('', ''),
    '<div class="field"><div class="pick"><select aria-label="Direction"><option>Conventi...</option></select><span class="tri tri-sm"></span></div></div>',
    spin('', ''), blank, blank, blank, spin('', ''), blank, blank, spin('', ''), rule, blank,
    spin('Maximum Roughin...', '5 mm', 'focused'), spin('Finishing Stepdow...', '0'), spin('Finishing Stepdown', '5 mm'),
    spin('Wall Taper Angle (d...', '0 deg'), check('Use Even Stepdowns'), check('Order by Depth'), check('Order by Step'), rule,
    '<div class="field gap-tick"><span class="tri"></span><input class="tick" type="checkbox" id="stock" checked><strong><label for="stock">Stock to Leave</label></strong></div>',
    spin('Radial Stock to Lea...', '0.5 mm'), spin('Axial Stock to Leave', '0.5 mm'), rule,
    '<div class="field gap-tick"><input class="tick" type="checkbox" id="smooth"><strong><label for="smooth">Smoothing</label></strong></div>'
  ].join('');
</script>
</body>
</html>
